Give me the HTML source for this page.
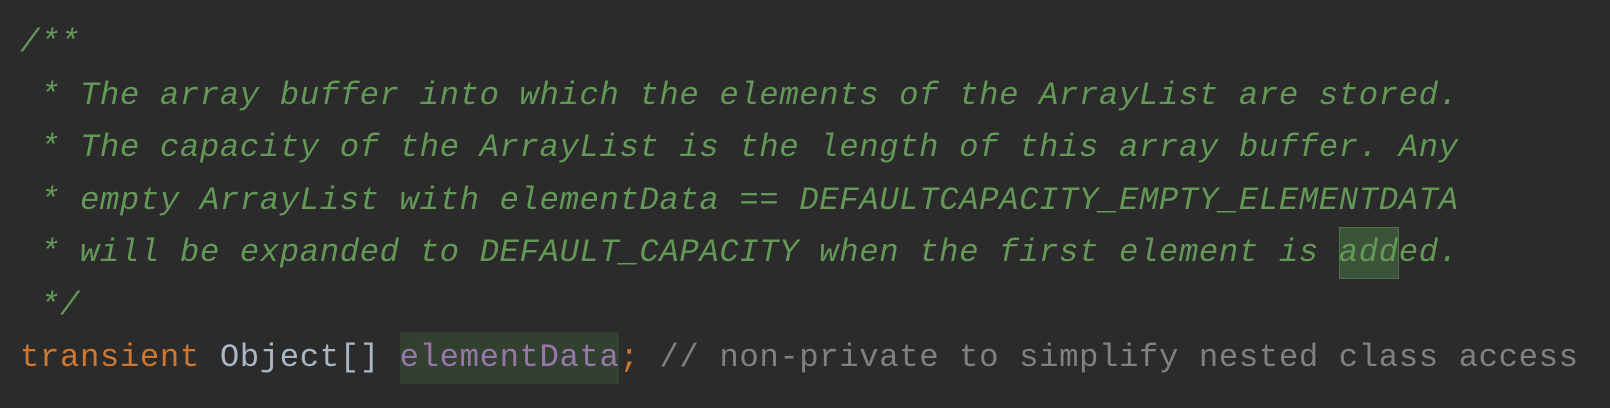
<!DOCTYPE html>
<html><head><meta charset="utf-8"><style>
html,body{margin:0;padding:0;background:#2b2b2b;width:1610px;height:408px;overflow:hidden}
pre{margin:0;padding:17px 0 0 20px;font-family:"Liberation Mono","DejaVu Sans Mono",monospace;font-size:32.3px;letter-spacing:0.6px;line-height:52.5px;color:#a9b7c6;white-space:pre}
.c{color:#639857;font-style:italic}
.k{color:#cc7832}
.f{color:#9876aa;background:#32402f;display:inline-block;line-height:52px;height:52px;vertical-align:top}
.g{color:#808080}
.h{background:#3b5339;outline:1px solid #4d7048;outline-offset:-1px;display:inline-block;line-height:52px;height:52px;vertical-align:top}
</style></head><body><pre><span class="c">/**
 * The array buffer into which the elements of the ArrayList are stored.
 * The capacity of the ArrayList is the length of this array buffer. Any
 * empty ArrayList with elementData == DEFAULTCAPACITY_EMPTY_ELEMENTDATA
 * will be expanded to DEFAULT_CAPACITY when the first element is <span class="h">add</span>ed.
 */</span>
<span class="k">transient</span> Object[] <span class="f">elementData</span><span class="k">;</span> <span class="g">// non-private to simplify nested class access</span></pre></body></html>
